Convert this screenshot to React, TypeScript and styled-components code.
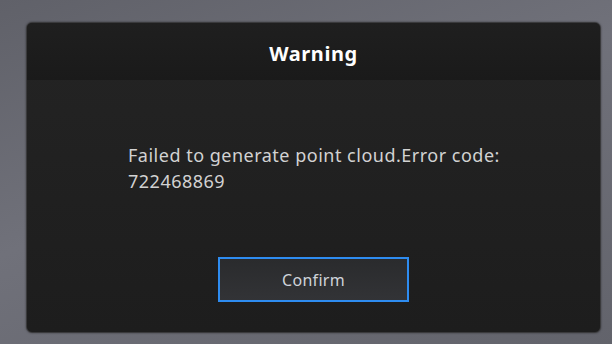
import React from 'react';
import styled, { createGlobalStyle } from 'styled-components';

const GlobalStyle = createGlobalStyle`
  html, body {
    margin: 0;
    padding: 0;
    width: 612px;
    height: 344px;
    overflow: hidden;
  }
  body {
    font-family: 'Noto Sans', 'Open Sans', sans-serif;
  }
`;

const Backdrop = styled.div`
  width: 612px;
  height: 344px;
  box-sizing: border-box;
  padding: 22px 11px 11px 26px;
  background: linear-gradient(160deg, #606169 0%, #70717a 45%, #62636b 100%);
`;

const Dialog = styled.div`
  width: 575px;
  height: 311px;
  box-sizing: border-box;
  display: flex;
  flex-direction: column;
  border: 1px solid #3a3a3c;
  border-radius: 6px;
  overflow: hidden;
  background: linear-gradient(180deg, #242424 0%, #1d1d1d 100%);
  box-shadow: 0 0 2px rgba(0, 0, 0, 0.5);
`;

const Header = styled.div`
  height: 57px;
  box-sizing: border-box;
  padding-top: 3px;
  flex-shrink: 0;
  display: flex;
  align-items: center;
  justify-content: center;
  background: linear-gradient(180deg, #1f1f1f 0%, #1a1a1a 100%);
`;

const Title = styled.h1`
  margin: 0;
  font-size: 20px;
  font-weight: 700;
  color: #ffffff;
  letter-spacing: 0.6px;
`;

const Body = styled.div`
  flex: 1;
  display: flex;
  flex-direction: column;
  align-items: center;
  padding-top: 62px;
`;

const Message = styled.p`
  margin: 0 0 0 9px;
  width: 380px;
  font-size: 18px;
  line-height: 26px;
  letter-spacing: 0.5px;
  color: #d2d2d2;
  text-align: left;
`;

const Button = styled.button`
  margin-top: 63px;
  width: 191px;
  height: 45px;
  box-sizing: border-box;
  border: 2px solid #2e8cf0;
  background: linear-gradient(180deg, #2a2b2d 0%, #323336 100%);
  color: #cfd4da;
  font-family: 'Noto Sans', 'Open Sans', sans-serif;
  font-size: 16px;
  letter-spacing: 0.3px;
  cursor: pointer;
`;

export default function App() {
  return (
    <>
      <GlobalStyle />
      <Backdrop>
        <Dialog>
          <Header>
            <Title>Warning</Title>
          </Header>
          <Body>
            <Message>Failed to generate point cloud.Error code: 722468869</Message>
            <Button>Confirm</Button>
          </Body>
        </Dialog>
      </Backdrop>
    </>
  );
}
